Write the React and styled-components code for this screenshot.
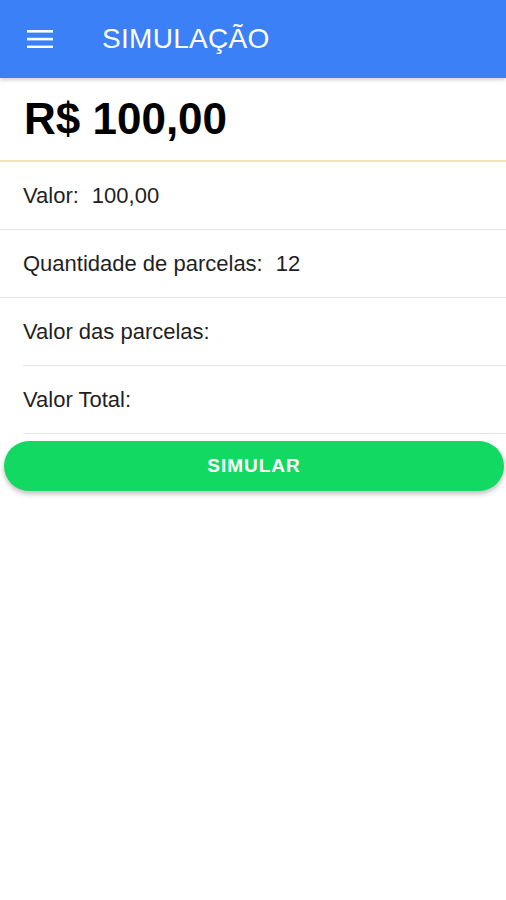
import styled, { createGlobalStyle } from "styled-components";

const GlobalStyle = createGlobalStyle`
  body {
    margin: 0;
    background: #ffffff;
    font-family: "Liberation Sans", Arial, sans-serif;
  }
`

const rows = [
  { label: "Valor:", value: "100,00", inset: false },
  { label: "Quantidade de parcelas:", value: "12", inset: false },
  { label: "Valor das parcelas:", value: "", inset: true },
  { label: "Valor Total:", value: "", inset: true },
]

const App = () => {
  return (
    <Page>
      <GlobalStyle />
      <Toolbar>
        <MenuButton aria-label="menu">
          <svg width="26" height="20" viewBox="0 0 26 20">
            <rect x="0" y="2" width="26" height="2.6" fill="#fff" />
            <rect x="0" y="9.8" width="26" height="2.6" fill="#fff" />
            <rect x="0" y="17.6" width="26" height="2.6" fill="#fff" />
          </svg>
        </MenuButton>
        <Title>SIMULAÇÃO</Title>
      </Toolbar>

      <Amount>R$ 100,00</Amount>

      <List>
        {rows.map(row => (
          <Row key={row.label} inset={row.inset ? 1 : 0}>
            <span>{row.label}</span>
            {row.value && <span>{row.value}</span>}
          </Row>
        ))}
      </List>

      <SimulateButton>SIMULAR</SimulateButton>
    </Page>
  )
}

const Page = styled.div`
  width: 506px;
  min-height: 900px;
  background: #ffffff;
`

const Toolbar = styled.header`
  display: flex;
  align-items: center;
  height: 78px;
  padding-left: 27px;
  gap: 49px;
  background-color: #3b80f7;
  box-shadow: 0 2px 4px rgba(0, 0, 0, 0.18);
  position: relative;
  z-index: 1;
`

const MenuButton = styled.div`
  display: flex;
  align-items: center;
  height: 26px;
  padding-bottom: 2px;
`

const Title = styled.h1`
  margin: 0;
  color: #ffffff;
  font-weight: 400;
  font-size: 28px;
  letter-spacing: 0.3px;
`

const Amount = styled.div`
  display: flex;
  align-items: center;
  height: 82px;
  padding-left: 24px;
  font-weight: 700;
  font-size: 44px;
  color: #000000;
  border-bottom: 2px solid #efe6b4;
`

const List = styled.div`
  display: flex;
  flex-direction: column;
`

const Row = styled.div`
  display: flex;
  align-items: center;
  gap: 13px;
  height: 67px;
  margin-left: ${p => (p.inset ? "23px" : "0")};
  padding-left: ${p => (p.inset ? "0" : "23px")};
  border-bottom: 1.5px solid #e6e6e6;
  font-size: 22px;
  color: #1f1f1f;
`

const SimulateButton = styled.button`
  display: block;
  width: 500px;
  height: 50px;
  margin: 7px 0 0 4px;
  border: none;
  border-radius: 25px;
  background-color: #12d962;
  color: #ffffff;
  font-family: "Liberation Sans", Arial, sans-serif;
  font-weight: 700;
  font-size: 19px;
  letter-spacing: 1px;
  box-shadow: 0 3px 5px rgba(0, 0, 0, 0.25);
`

export default App;
